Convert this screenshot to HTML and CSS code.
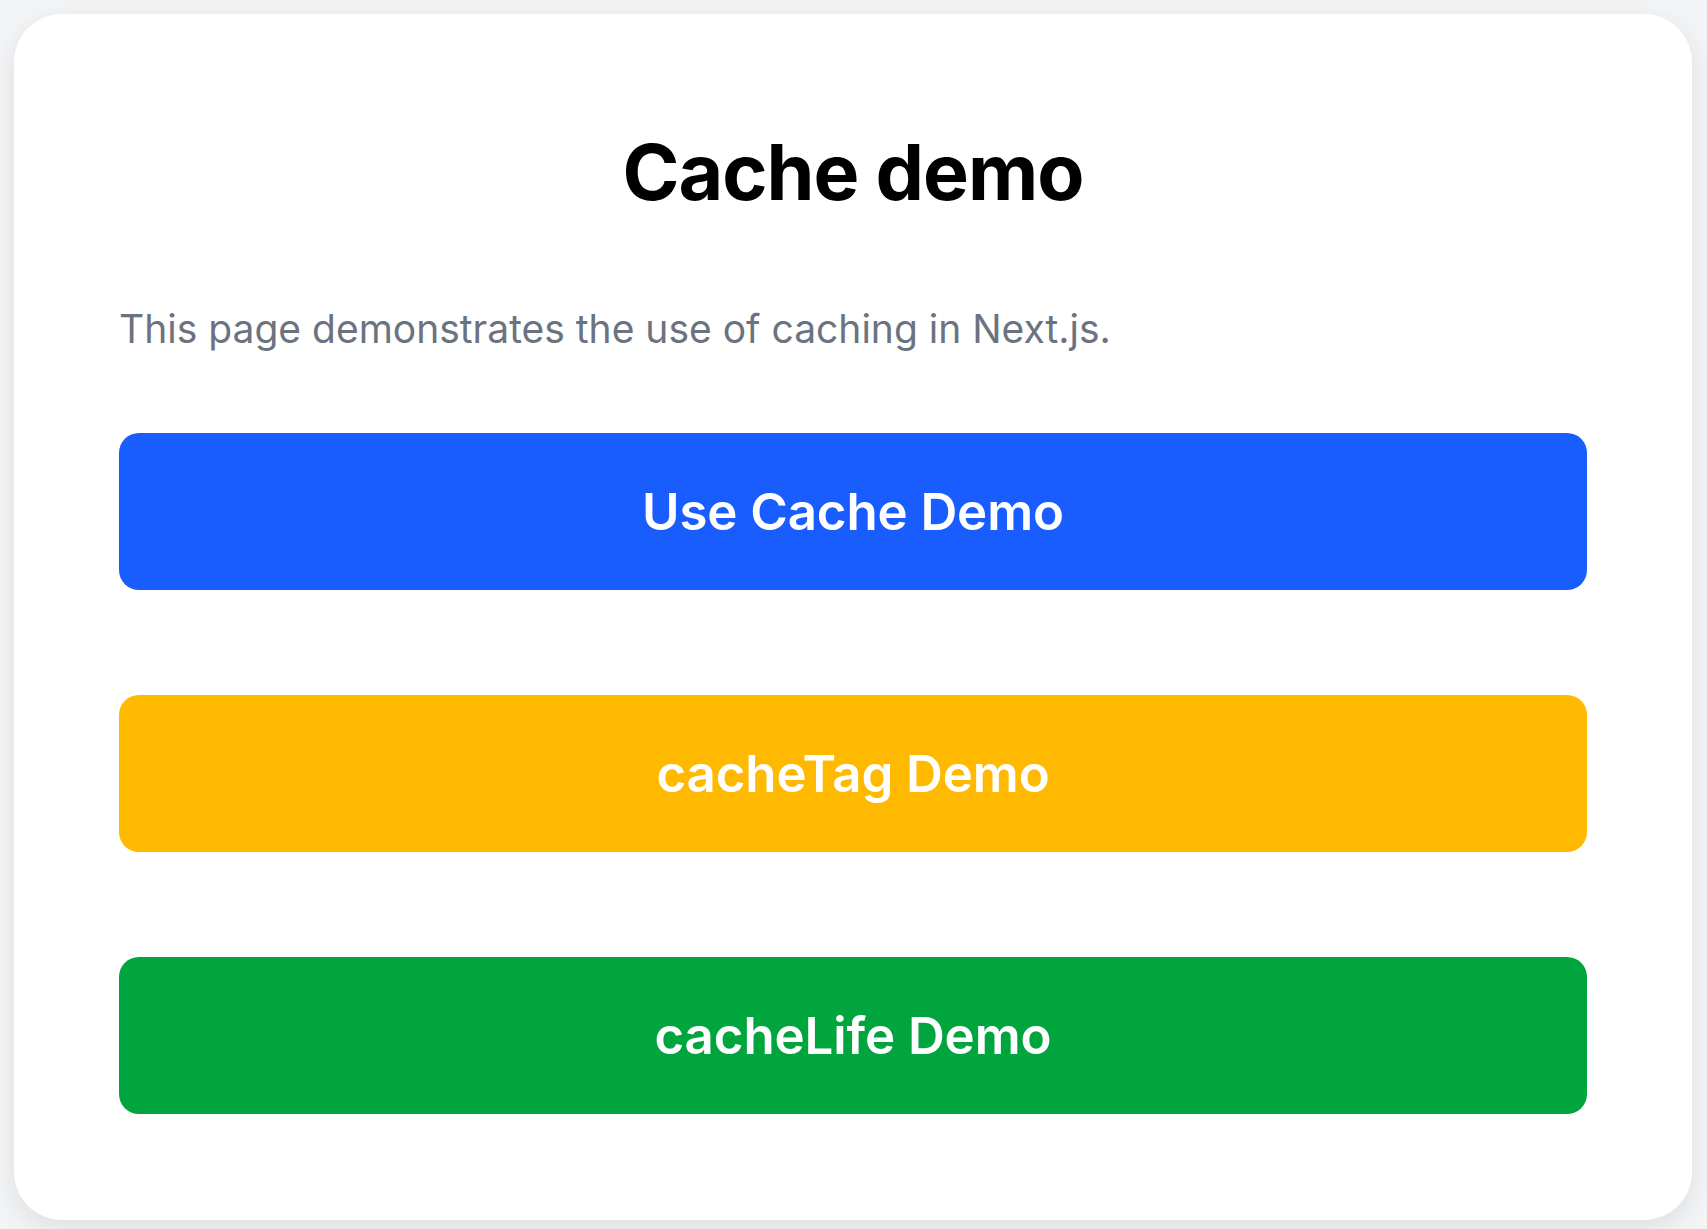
FILE: index.html
```html
<!DOCTYPE html>
<html lang="en">
<head>
    <meta charset="UTF-8">
    <meta name="viewport" content="width=device-width, initial-scale=1.0">
    <title>Cache demo</title>
    <link rel="stylesheet" href="styles.css">
</head>
<body>
    <main class="card">
        <h1>Cache demo</h1>
        <p class="intro">This page demonstrates the use of caching in Next.js.</p>

        <!-- Demo links -->
        <nav class="demo-links">
            <a href="#" class="btn btn-blue">Use Cache Demo</a>
            <a href="#" class="btn btn-yellow">cacheTag Demo</a>
            <a href="#" class="btn btn-green">cacheLife Demo</a>
        </nav>
    </main>
</body>
</html>
```

FILE: styles.css
```css
/* Global Styles */
body {
    font-family: 'Inter', 'Noto Sans', sans-serif;
    margin: 0;
    padding: 14px 15px 9px 14px;
    background-color: #f3f4f6;
    color: #000;
}

a {
    text-decoration: none;
}

/* Card */
.card {
    background-color: #fff;
    border-radius: 48px;
    padding: 110px 105px 106px 105px;
    box-shadow: 0 8px 28px rgba(0, 0, 0, 0.09);
}

.card h1 {
    margin: 0 0 80px;
    font-size: 77px;
    line-height: 96px;
    font-weight: 700;
    text-align: center;
    letter-spacing: -1px;
}

.intro {
    margin: 0 0 75px;
    font-size: 39px;
    line-height: 58px;
    color: #6b7280;
}

/* Buttons */
.demo-links {
    display: flex;
    flex-direction: column;
    gap: 105px;
}

.btn {
    display: flex;
    align-items: center;
    justify-content: center;
    height: 157px;
    border-radius: 20px;
    color: #fff;
    font-size: 51px;
    font-weight: 600;
    letter-spacing: -0.1px;
}

.btn-blue {
    background-color: #1a5dff;
}

.btn-yellow {
    background-color: #ffb900;
}

.btn-green {
    background-color: #00a53e;
}
```
